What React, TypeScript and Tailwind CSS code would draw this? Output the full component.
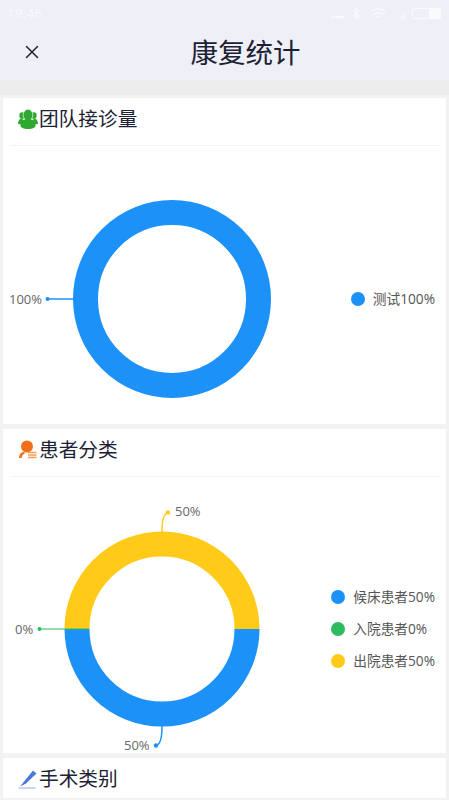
import { X } from 'lucide-react'

const font = { cjk: "font-['Open_Sans','Noto_Sans_CJK_SC',sans-serif]" }

function StatusBar() {
  return (
    <div className="h-[27px] flex items-center justify-between pl-[7px] pr-[8px] text-white/60">
      <span className="text-[13px] tracking-[0.5px]">19:46</span>
      <div className="flex items-center">
        <svg width="13" height="6" viewBox="0 0 13 6" className="mt-[5px] mr-[8px]" fill="#fff" opacity="0.7">
          <circle cx="1.500" cy="4" r="1.200" />
          <rect x="4" y="3" width="9" height="2" />
        </svg>
        <svg width="8" height="13" viewBox="0 0 8 13" className="mr-[10px]" fill="none" stroke="#fff" strokeWidth="1.200" opacity="0.7">
          <path d="M1 3.500l6 5.500-3 3V1l3 3-6 5.500" />
        </svg>
        <svg width="17" height="12" viewBox="0 0 17 12" className="mr-[13px]" fill="none" stroke="#fff" strokeWidth="1.400" opacity="0.7">
          <path d="M1 3.500c4.500-3.500 10.500-3.500 15 0M3.500 6.500c3-2.300 7-2.300 10 0M6 9.300c1.500-1.100 3.500-1.100 5 0" />
        </svg>
        <svg width="6" height="6" viewBox="0 0 6 6" className="mt-[4px] mr-[6px]" fill="#fff" opacity="0.5">
          <path d="M5 0v6H0z" />
        </svg>
        <div className="w-[29px] h-[11px] rounded-[2px] border border-white/70 flex justify-end">
          <div className="w-[11px] bg-white/70" />
        </div>
      </div>
    </div>
  )
}

function TeamIcon() {
  return (
    <svg width="20" height="20" viewBox="0 0 20 20" fill="#2fa82f">
      <circle cx="4.500" cy="6.500" r="3.200" />
      <circle cx="15.500" cy="6.500" r="3.200" />
      <path d="M0 15c0-3 1.500-5.500 4-6l3 7zM20 15c0-3-1.500-5.500-4-6l-3 7z" />
      <ellipse cx="10" cy="6" rx="4.800" ry="5.800" stroke="#fff" strokeWidth="0.600" />
      <path d="M2.500 16.500c0-4 2.500-6.500 7.500-6.500s7.500 2.500 7.500 6.500c0 2.200-3 3.500-7.500 3.500s-7.500-1.300-7.500-3.500z" />
    </svg>
  )
}

function PatientIcon() {
  return (
    <svg width="19" height="19" viewBox="0 0 19 19">
      <circle cx="9" cy="6.500" r="6" fill="#f0701a" />
      <path d="M1 18c0-3.500 2-5.500 4.500-6.200l2 1.200c-2 .8-3.500 2.500-4 5z" fill="#f0701a" />
      <path d="M10 12.500h8.500M10 15h8.500M10 17.500h8.500" stroke="#f2a05a" strokeWidth="1.500" />
    </svg>
  )
}

function SurgeryIcon() {
  return (
    <svg width="19" height="19" viewBox="0 0 19 19">
      <path d="M15 0.500l3.500 3L8 13.500l-6 3z" fill="#4a78d6" />
      <path d="M0.500 18h17" stroke="#a9bde6" strokeWidth="1.200" />
    </svg>
  )
}

function CardTitle({ icon, title, divider = true }: { icon: React.ReactNode; title: string; divider?: boolean }) {
  return (
    <div className={`mx-[7px] flex items-center pl-[8px] ${divider ? 'h-[48px] border-b border-[#f3f3f5] pb-[6px]' : 'h-[42px]'}`}>
      <span className="w-[21px] flex justify-start shrink-0">{icon}</span>
      <span className="text-[19.700px] leading-none text-[#1c2233]">{title}</span>
    </div>
  )
}

function Legend({ items }: { items: { color: string; label: string }[] }) {
  return (
    <div className="flex flex-col items-start gap-[12px] mt-[28px] pr-[11px]">
      {items.map((it) => (
        <div key={it.label} className="flex items-center h-[20px]">
          <span className="w-[14px] h-[14px] rounded-full mr-[8px]" style={{ backgroundColor: it.color }} />
          <span className="text-[13.700px] leading-none text-[#555]">{it.label}</span>
        </div>
      ))}
    </div>
  )
}

const labelStyle = { fontSize: 13, fill: '#666' }

export default function App() {
  return (
    <div className={`w-[449px] h-[800px] overflow-hidden bg-[#f2f2f2] ${font.cjk}`}>
      <div className="bg-[#efeff8]">
        <StatusBar />
        <div className="relative h-[53px] flex items-center justify-center">
          <X className="absolute left-[21px] top-[14px] w-[22px] h-[22px] text-[#1c2233]" strokeWidth={1.600} />
          <span className="ml-[42px] mt-[-2px] text-[27.500px] leading-none text-[#1c2233]">康复统计</span>
        </div>
      </div>
      <div className="h-[15px] bg-[#ededed]" />
      <div className="px-[3px] pt-[3px] flex flex-col gap-[5px]">
        <section className="bg-white h-[326px]">
          <CardTitle icon={<TeamIcon />} title="团队接诊量" />
          <div className="flex items-center justify-between">
            <svg width="335" height="278" viewBox="3 146 335 278">
              <circle cx="172" cy="299" r="86.500" fill="none" stroke="#1c92f8" strokeWidth="25" />
              <path d="M47 299H74" stroke="#1c92f8" strokeWidth="1.500" />
              <circle cx="47.500" cy="299" r="2" fill="#1c92f8" />
              <text x="9" y="303.500" style={labelStyle}>100%</text>
            </svg>
            <Legend items={[{ color: '#1c92f8', label: '测试100%' }]} />
          </div>
        </section>
        <section className="bg-white h-[324px]">
          <CardTitle icon={<PatientIcon />} title="患者分类" />
          <div className="flex items-center justify-between">
            <svg width="320" height="276" viewBox="3 477 320 276">
              <path d="M77 629a85 85 0 0 0 170 0" fill="none" stroke="#1c92f8" strokeWidth="25" />
              <path d="M77 629a85 85 0 0 1 170 0" fill="none" stroke="#ffcb18" strokeWidth="25" />
              <path d="M40 629H89" stroke="#2dbb5e" strokeWidth="1.200" />
              <circle cx="39.500" cy="629" r="2" fill="#2dbb5e" />
              <text x="15" y="633.500" style={labelStyle}>0%</text>
              <path d="M162 532c0-12 2-19 6-19" fill="none" stroke="#ffcb18" strokeWidth="1.500" />
              <circle cx="168" cy="512.500" r="2.200" fill="#ffcb18" />
              <text x="175" y="516" style={labelStyle}>50%</text>
              <path d="M162 726c0 12-2 19-6 19" fill="none" stroke="#1c92f8" strokeWidth="1.500" />
              <circle cx="156" cy="745.500" r="2.200" fill="#1c92f8" />
              <text x="124" y="750" style={labelStyle}>50%</text>
            </svg>
            <Legend
              items={[
                { color: '#1c92f8', label: '候床患者50%' },
                { color: '#2dbb5e', label: '入院患者0%' },
                { color: '#ffcb18', label: '出院患者50%' },
              ]}
            />
          </div>
        </section>
        <section className="bg-white h-[40px]">
          <CardTitle icon={<SurgeryIcon />} title="手术类别" divider={false} />
        </section>
      </div>
    </div>
  )
}
